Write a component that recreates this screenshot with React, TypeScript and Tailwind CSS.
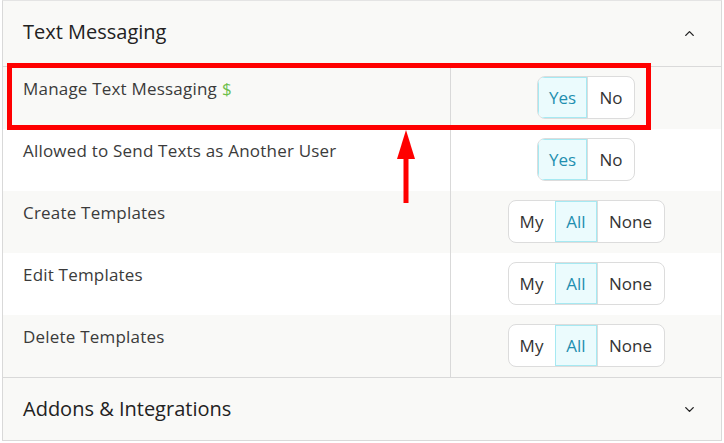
import { ChevronUp, ChevronDown } from "lucide-react";

type Row = { label: string; dollar?: boolean; options: string[]; selected: string };

const rows: Row[] = [
  { label: "Manage Text Messaging", dollar: true, options: ["Yes", "No"], selected: "Yes" },
  { label: "Allowed to Send Texts as Another User", options: ["Yes", "No"], selected: "Yes" },
  { label: "Create Templates", options: ["My", "All", "None"], selected: "All" },
  { label: "Edit Templates", options: ["My", "All", "None"], selected: "All" },
  { label: "Delete Templates", options: ["My", "All", "None"], selected: "All" },
];

const optionWidth: Record<string, string> = {
  Yes: "w-[49px]",
  No: "w-[47px]",
  My: "w-[46px]",
  All: "w-[42px]",
  None: "w-[67px]",
};

function Segmented({ options, selected }: { options: string[]; selected: string }) {
  return (
    <div className="flex h-[43px] rounded-lg border border-[#dcdcdc] bg-white overflow-hidden">
      {options.map((opt, i) => {
        const active = opt === selected;
        return (
          <div
            key={opt}
            className={
              "flex items-center justify-center text-[17px] " +
              optionWidth[opt] +
              " " +
              (i > 0 ? "border-l " : "") +
              (active
                ? "bg-[#ebfbfd] text-[#1f8fb0] outline outline-1 -outline-offset-1 outline-[#a6e9f2] border-[#a6e9f2]"
                : "text-[#333] border-[#dcdcdc]")
            }
          >
            {opt}
          </div>
        );
      })}
    </div>
  );
}

export default function App() {
  return (
    <div className="relative w-[724px] h-[443px] bg-white px-[2px] font-['Open_Sans',sans-serif]">
      <div className="border border-[#d9d9d9] border-t-[#e4e4e4]">
        {/* Section header */}
        <div className="flex items-center justify-between h-[66px] bg-[#f9f9f7] border-b border-[#dadada] pl-[20px] pr-[24px]">
          <span className="text-[20px] text-[#222] pb-[3px]">Text Messaging</span>
          <ChevronUp size={15} strokeWidth={2.2} className="text-[#222]" />
        </div>

        {rows.map((row, i) => (
          <div
            key={row.label}
            className={"flex h-[62px] " + (i % 2 === 0 ? "bg-[#f9f9f7]" : "bg-white")}
          >
            <div className="w-[448px] border-r border-[#d9d9d9] pl-[20px] pt-[9px] text-[17px] tracking-[0.2px] text-[#3b3b3b]">
              {row.label}
              {row.dollar && <span className="ml-[5px] text-[#6cbf4c]">$</span>}
            </div>
            <div className="flex-1 flex justify-center pt-[9px]">
              <Segmented options={row.options} selected={row.selected} />
            </div>
          </div>
        ))}

        {/* Collapsed section */}
        <div className="flex items-center justify-between h-[63px] bg-[#f9f9f7] border-t border-[#d9d9d9] pl-[20px] pr-[24px]">
          <span className="text-[20px] text-[#222]">Addons &amp; Integrations</span>
          <ChevronDown size={15} strokeWidth={2.2} className="text-[#222]" />
        </div>
      </div>

      {/* Annotation overlay */}
      <div className="absolute left-[7px] top-[63px] w-[644px] h-[67px] border-[5px] border-[#ff0000]" />
      <svg className="absolute left-[394px] top-[129px]" width="24" height="76" viewBox="0 0 24 76">
        <polygon points="12,1 21,30 3,30" fill="#ff0000" />
        <rect x="9.5" y="28" width="5" height="46" fill="#ff0000" />
      </svg>
    </div>
  );
}
